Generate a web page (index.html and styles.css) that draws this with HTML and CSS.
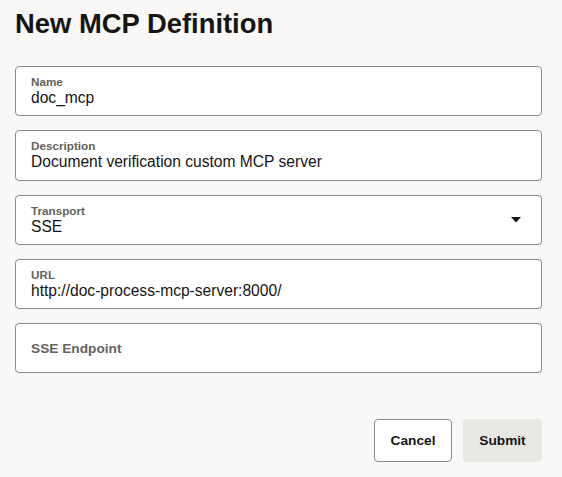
FILE: index.html
```html
<!DOCTYPE html>
<html>
<head>
<meta charset="utf-8">
<link rel="stylesheet" href="styles.css">
</head>
<body>
<div class="page">
  <h1 class="title">New MCP Definition</h1>
  <div class="form">
    <div class="field">
      <div class="label">Name</div>
      <div class="value">doc_mcp</div>
    </div>
    <div class="field">
      <div class="label">Description</div>
      <div class="value">Document verification custom MCP server</div>
    </div>
    <div class="field select">
      <div class="field-text">
        <div class="label">Transport</div>
        <div class="value">SSE</div>
      </div>
      <svg class="caret" width="10" height="6" viewBox="0 0 10 6"><path d="M0 0 H10 L5 5.5 Z" fill="#161513"/></svg>
    </div>
    <div class="field">
      <div class="label">URL</div>
      <div class="value">http://doc-process-mcp-server:8000/</div>
    </div>
    <div class="field empty">
      <div class="placeholder">SSE Endpoint</div>
    </div>
  </div>
  <div class="actions">
    <button class="btn btn-outline">Cancel</button>
    <button class="btn btn-filled">Submit</button>
  </div>
</div>
</body>
</html>
```
FILE: styles.css
```css
html, body {
  margin: 0;
  padding: 0;
  background: #f9f8f6;
}
body {
  font-family: "Liberation Sans", Arial, sans-serif;
  color: #161513;
}
.page {
  padding: 4px 20px 0 15px;
}
.title {
  margin: 0;
  font-size: 27.4px;
  line-height: 40px;
  font-weight: 700;
  color: #161513;
}
.form {
  margin-top: 22px;
  display: flex;
  flex-direction: column;
  gap: 14px;
}
.field {
  box-sizing: border-box;
  height: 50.25px;
  background: #fff;
  border: 1px solid #8f8c88;
  border-radius: 4px;
  padding: 8px 15px 0 15px;
}
.label {
  font-size: 11.7px;
  line-height: 14px;
  font-weight: 700;
  color: #65625e;
}
.value {
  font-size: 15.6px;
  line-height: 18px;
  color: #161513;
}
.select {
  display: flex;
  align-items: center;
  justify-content: space-between;
  padding-top: 0;
  padding-right: 20px;
}
.empty {
  display: flex;
  align-items: center;
  padding-top: 0;
}
.placeholder {
  font-size: 13.7px;
  font-weight: 700;
  color: #65625e;
}
.actions {
  margin-top: 46px;
  display: flex;
  justify-content: flex-end;
  gap: 11px;
}
.btn {
  box-sizing: border-box;
  height: 43px;
  font-family: "Liberation Sans", Arial, sans-serif;
  font-size: 13.7px;
  font-weight: 700;
  color: #161513;
  border-radius: 4px;
}
.btn-outline {
  width: 78px;
  background: #fff;
  border: 1px solid #8f8c88;
}
.btn-filled {
  width: 79px;
  background: #e8e7e4;
  border: none;
}
```
